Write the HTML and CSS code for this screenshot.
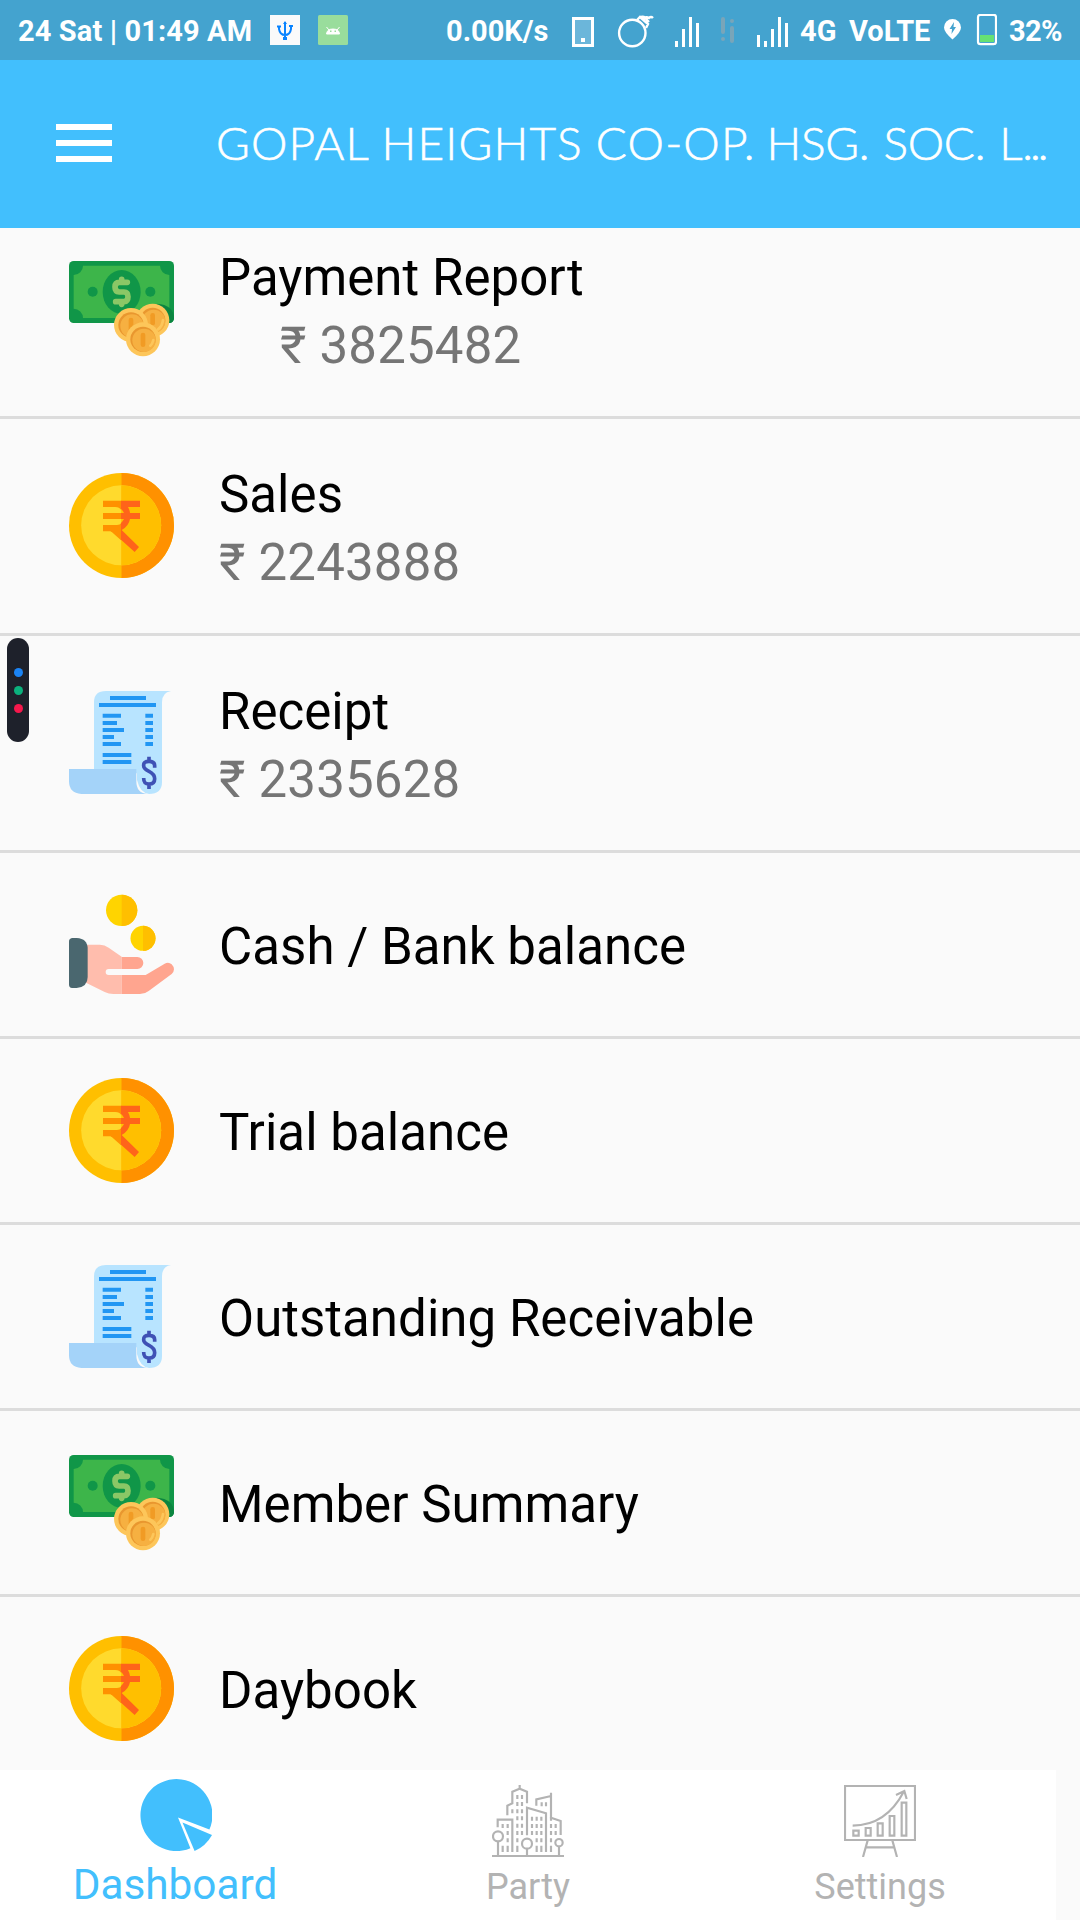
FILE: index.html
```html
<!DOCTYPE html>
<html lang="en">
<head>
<meta charset="utf-8">
<title>Dashboard</title>
<link rel="stylesheet" href="styles.css">
</head>
<body>
<svg class="defs" width="0" height="0">
  <symbol id="money" viewBox="57 78 315 315">
    <rect x="57" y="93" width="315" height="186" rx="14" fill="#109648"/>
    <path d="M99 107H330A28 28 0 0 0 358 135V236A28 28 0 0 0 330 264H99A28 28 0 0 0 71 236V135A28 28 0 0 0 99 107Z" fill="#3db54a"/>
    <ellipse cx="215" cy="186" rx="57" ry="66" fill="#109648"/>
    <circle cx="128" cy="185" r="15" fill="#109648"/><circle cx="301" cy="185" r="15" fill="#109648"/>
    <path d="M232 157H208Q195 157 195 171T208 186H222Q234 186 234 200T222 215H197M215 148V156M215 216V223" fill="none" stroke="#8bc766" stroke-width="17" stroke-linecap="round" stroke-linejoin="round"/>
    <path d="M320 221Q372 224 372 267Q368 279 358 279H330Z" fill="#0b8540"/>
    <circle cx="308" cy="271" r="50" fill="#fdc65a"/><circle cx="308" cy="271" r="38" fill="#e9972f"/><circle cx="311" cy="274" r="35" fill="#f6b041"/>
    <path d="M308 256V280" stroke="#f19b24" stroke-width="14" stroke-linecap="round"/><path d="M339 270Q337 289 324 298" fill="none" stroke="#fdc65a" stroke-width="8" stroke-linecap="round"/>
    <circle cx="243" cy="285" r="51" fill="#fdc65a"/><circle cx="243" cy="285" r="38" fill="#e9972f"/><circle cx="246" cy="288" r="35" fill="#f6b041"/>
    <path d="M243 270V300" stroke="#f19b24" stroke-width="14" stroke-linecap="round"/>
    <circle cx="279" cy="328" r="51" fill="#fdc65a"/><circle cx="279" cy="328" r="38" fill="#e9972f"/><circle cx="282" cy="331" r="35" fill="#f6b041"/>
    <path d="M279 315V344" stroke="#f19b24" stroke-width="14" stroke-linecap="round"/><path d="M310 330Q308 341 301 347" fill="none" stroke="#fdc65a" stroke-width="8" stroke-linecap="round"/>
  </symbol>
  <symbol id="coin" viewBox="57 69 315 315">
    <circle cx="214.500" cy="226.500" r="157.500" fill="#ffbf00"/><path d="M214.500 69A157.500 157.500 0 0 1 214.500 384Z" fill="#ff9100"/>
    <circle cx="213.500" cy="226" r="120" fill="#ffda2d"/><path d="M213.500 106A120 120 0 0 1 213.500 346Z" fill="#ffbf00"/>
    <path d="M159 152H214V171H159ZM159 189H214V207H159ZM159 225H201Q210 225 214 219V248L210 245L206 246H186L181 243.500H159ZM196 171Q209 171 214 181V171Z" fill="#ff9100"/>
    <path d="M213 152H270V171H234Q239 180 240 189H270V207H240Q236 229 215 240L267 291L254 306L213 269V219Q219 213 222 207H213V189H222Q220 183 213 176Z" fill="#ff641a"/>
    <path d="M182 243H213V271Z" fill="#ff9100"/>
  </symbol>
  <symbol id="receipt" viewBox="207 210 315 315">
    <path d="M282 460V247Q282 213 318 213H513Q486 217 486 247V486Q486 522 447 522Q420 518 411 480V460Z" fill="#b8e4ff"/>
    <path d="M207 447H409V484Q409 519 441 522H244Q207 519 207 484Z" fill="#a4d3f9"/>
    <path d="M330 234H438M297 255H468M308 287H363M308 309H351M308 330H372M308 351H342M308 372H363M308 405H394M308 426H394M436 287H459M436 309H459M436 330H459M436 351H459M436 372H459" stroke="#2196f3" stroke-width="12"/>
    <path d="M464 443V437Q464 424 447 424T431 437C431 456 464 451 464 476C464 487 459 492 447 492S431 487 431 474M447 410V424M447 492V507" fill="none" stroke="#3f51b5" stroke-width="11"/>
  </symbol>
  <symbol id="hand" viewBox="57 36 315 315">
    <circle cx="215" cy="91" r="47" fill="#ffd400"/><path d="M215 44A47 47 0 0 1 215 138Z" fill="#ffbf00"/>
    <circle cx="279" cy="175" r="37.500" fill="#ffd400"/><path d="M279 137.500A37.500 37.500 0 0 1 279 212.500Z" fill="#ffbf00"/>
    <path d="M108 194H150Q164 194 176 203L215 230V267H176Q167 267 167 276T176 285H215V342H190Q176 342 164 336L108 308Z" fill="#ffbdad"/>
    <path d="M215 231H262A18 18 0 0 1 262 267H215ZM215 285H287L344 251Q356 245 365 253Q379 268 365 282L296 333Q285 342 270 342H215Z" fill="#ffa58f"/>
    <path d="M66 174H80Q113 176 113 207V291Q113 321 80 324H66Q57 322 57 314V184Q57 176 66 174Z" fill="#4a676f"/>
  </symbol>
</svg>
<div class="app">
  <div class="status">
    <span class="clock">24 Sat | 01:49 AM</span>
    <svg class="usb" width="30" height="30" viewBox="0 0 30 30"><path fill="#fafafa" d="M0 0h30v30H0z"/><path d="M15 7V24M9 11V14Q10 20 15 20T21 14V11M7 11.500H11M19 11H23" fill="none" stroke="#0a84ff" stroke-width="2"/><path d="M13 9L15 6L17 9ZM13 22H17V25H13Z" fill="#0a84ff"/></svg>
    <svg class="droid" width="30" height="30" viewBox="0 0 30 30"><rect width="30" height="30" rx="1.500" fill="#99dd9c"/><path d="M8.500 19Q9 14 15 14T21.500 19ZM8.500 12L11 15M21.500 12L19 15" fill="#fff" stroke="#fff"/><path d="M12 15.500h1.500v1.500H12zM16.500 15.500H18v1.500h-1.500z" fill="#99dd9c"/></svg>
    <span class="speed">0.00K/s</span>
    <svg class="indicators" width="216" height="36" viewBox="572 13 216 36">
      <path d="M573.500 18.500H592.500V45.500H573.500Z" fill="#6bb6da" stroke="#fff" stroke-width="3"/><path d="M581 38h4v4h-4z" fill="#fff"/>
      <g fill="none" stroke="#fff" stroke-width="2.400"><circle cx="632.300" cy="33" r="13.200"/><path d="M637 20L640 17L648 24L646 28M641 17Q645 16 647 20L649 22M644 19Q646 16 649 18Q651 16 653 18"/></g>
      <path d="M675 41h3v6h-3zM682 29h3v18h-3zM689 17h3v30h-3zM696 23h3v24h-3zM757 35h3v12h-3zM764 41h3v6h-3zM771 29h3v18h-3zM778 17h3v30h-3zM785 23h3v24h-3z" fill="#fff"/>
      <path d="M723 19V32M723 39V39.100M732 21V21.100M732 28V41" stroke="#79a5b9" stroke-width="4" stroke-linecap="round"/>
    </svg>
    <span class="net">4G</span><span class="volte">VoLTE</span>
    <svg class="power" width="53" height="32" viewBox="944 14 53 32"><path d="M952.500 39.500Q944 32 944 27.500A8.500 8.500 0 0 1 961 27.500Q961 32 952.500 39.500Z" fill="#fff"/><path d="M954 22L949.500 29H952L951.500 34L956 27H953.500Z" fill="#44a3cf"/><rect x="978" y="14.800" width="18" height="29.400" rx="2.500" fill="none" stroke="#fff" stroke-width="2.200"/><path d="M980 35h14v7h-14z" fill="#66e174"/></svg>
    <span class="pct">32%</span>
  </div>
  <header class="bar">
    <div class="menu"><i></i><i></i><i></i></div>
    <h1 class="title">GOPAL HEIGHTS CO-OP. <span class="suffix">HSG. SOC. L<span class="dots">...</span></span></h1>
  </header>
  <main class="content">
    <ul class="list">
      <li class="row tall"><svg class="icon"><use href="#money"/></svg><div class="label">Payment Report<span class="amount indent">₹ 3825482</span></div></li>
      <li class="row tall"><svg class="icon"><use href="#coin"/></svg><div class="label">Sales<span class="amount">₹ 2243888</span></div></li>
      <li class="row tall"><svg class="icon"><use href="#receipt"/></svg><div class="label">Receipt<span class="amount">₹ 2335628</span></div></li>
      <li class="row"><svg class="icon"><use href="#hand"/></svg><div class="label">Cash / Bank balance</div></li>
      <li class="row"><svg class="icon"><use href="#coin"/></svg><div class="label">Trial balance</div></li>
      <li class="row"><svg class="icon"><use href="#receipt"/></svg><div class="label">Outstanding Receivable</div></li>
      <li class="row"><svg class="icon"><use href="#money"/></svg><div class="label">Member Summary</div></li>
      <li class="row"><svg class="icon"><use href="#coin"/></svg><div class="label">Daybook</div></li>
    </ul>
  </main>
  <nav class="tabs">
    <div class="tab active">
      <svg width="72" height="72" viewBox="0 0 72 72" fill="#42bffd"><path d="M38 38.500L69.400 50.600A36 36 0 1 0 50.400 69.300Z"/><path d="M42.500 43.500L72 56Q66 67 54.600 72Z"/></svg>
      <span>Dashboard</span>
    </div>
    <div class="tab">
      <svg width="72" height="72" viewBox="36 30 216 216" fill="none" stroke="#b3b3b3" stroke-width="6.500">
        <path d="M36 243H252M119 30V41M97 85V50L119 41L141 50V85M97 80V85L82 92V121M53 157V134H97V231M141 181V98L198 115V231M169 92V73L213 63V128L242 138V180M213 53V64M54 199V243M141 221V243M237 214V243"/>
        <circle cx="54" cy="184" r="15"/><circle cx="141" cy="206" r="15"/><circle cx="237" cy="203" r="11"/>
        <path d="M112 60V72M126 60V72M112 81V93M126 81V93M97 103V115M112 103V115M126 103V115M112 124V136M126 124V136M112 146V158M126 146V158M112 168V180M126 168V180M68 147V159M83 147V159M83 168V180M83 190V202M68 212V231M83 212V231M112 190V202M112 212V231M156 125V137M170 125V137M184 125V137M156 147V159M170 147V159M184 147V159M156 168V180M170 168V180M184 168V180M170 190V202M184 190V202M170 212V231M184 212V231M185 82V94M198 82V94M213 125V137M213 147V159M227 147V159M213 168V180M227 168V180M213 190V202M213 212V231"/>
      </svg>
      <span>Party</span>
    </div>
    <div class="tab">
      <svg width="72" height="72" viewBox="42 30 216 216" fill="none" stroke="#b3b3b3" stroke-width="6.500">
        <path d="M45 33H255V195H45ZM113 196L99 246M187 196L201 246M109 217H191M70 167H86V182H70ZM107 159H122V182H107ZM143 145H158V182H143ZM179 123H193V182H179ZM215 83H229V182H215ZM68 152C130 152 185 120 222 49M198 60L223 48L230 72"/>
      </svg>
      <span>Settings</span>
    </div>
  </nav>
  <aside class="handle"><i class="blue"></i><i class="green"></i><i class="red"></i></aside>
</div>
</body>
</html>
```
FILE: styles.css
```css
* { box-sizing: border-box; }
body { margin: 0; background: #fafafa; font-family: Roboto, sans-serif; }
.defs { position: absolute; }
.app { position: relative; width: 1080px; height: 1920px; display: flex; flex-direction: column; overflow: hidden; }

.status { height: 60px; flex: none; display: flex; align-items: center; padding-left: 18px; background: #44a3cf; color: #fff; font-size: 29px; font-weight: 700; white-space: nowrap; }
.status svg { flex: none; }
.status span { flex: none; line-height: 60px; padding-top: 2px; }
.status .clock { width: 252px; letter-spacing: 0.12px; }
.droid { margin-left: 18px; }
.speed { width: 126px; margin-left: 98px; }
.indicators { margin-top: 2px; }
.net { width: 49px; margin-left: 12px; }
.volte { width: 95px; }
.status .pct { margin-left: 12px; letter-spacing: -0.7px; }

.bar { height: 168px; flex: none; display: flex; align-items: center; padding-left: 56px; background: #42bffd; }
.menu { width: 56px; display: flex; flex-direction: column; gap: 10px; margin: 0 104px 2px 0; }
.menu i { height: 6px; background: #fff; }
.title { margin: 0 0 2px; color: #fff; font-family: Lato, sans-serif; font-weight: 300; font-size: 46px; line-height: 60px; white-space: nowrap; letter-spacing: 1.2px; word-spacing: -0.8px; -webkit-text-stroke: 0.6px #fff; }
.suffix { margin-left: -2px; letter-spacing: -0.3px; word-spacing: 2px; }
.dots { letter-spacing: -3px; }

.content { flex: 1; min-height: 0; overflow: hidden; }
.list { list-style: none; margin: -26px 0 0; padding: 0; }
.row { height: 186px; display: flex; align-items: center; padding-left: 69px; border-bottom: 3px solid #dcdcdc; }
.row.tall { height: 217px; }
.icon { width: 105px; height: 105px; flex: none; align-self: flex-start; margin: 39px 45px 0 0; }
.tall .icon { margin-top: 54px; }
.label { padding-top: 5px; font-size: 51px; line-height: 68px; letter-spacing: 0.04px; color: #000; white-space: nowrap; }
.amount { display: block; color: #757575; letter-spacing: 0.2px; }
.indent { padding-left: 61px; }

.tabs { width: 1056px; height: 150px; flex: none; display: flex; background: #fff; }
.tab { flex: 1; display: flex; flex-direction: column; align-items: center; padding-top: 15px; color: #b3b3b3; font-size: 36px; line-height: 44px; }
.tab svg { flex: none; margin-bottom: 8px; }
.tab.active { padding-top: 9px; color: #42bffd; font-size: 42.3px; line-height: 52px; }
.active span { margin-left: -2px; }

.handle { position: absolute; left: 7px; top: 638px; width: 22px; height: 104px; border-radius: 11px; background: #1e212b; display: flex; flex-direction: column; align-items: center; justify-content: center; gap: 9px; }
.handle i { width: 9px; height: 9px; border-radius: 50%; }
.blue { background: #1b84f5; }
.green { background: #0bb17d; }
.red { background: #f5184c; }
```
